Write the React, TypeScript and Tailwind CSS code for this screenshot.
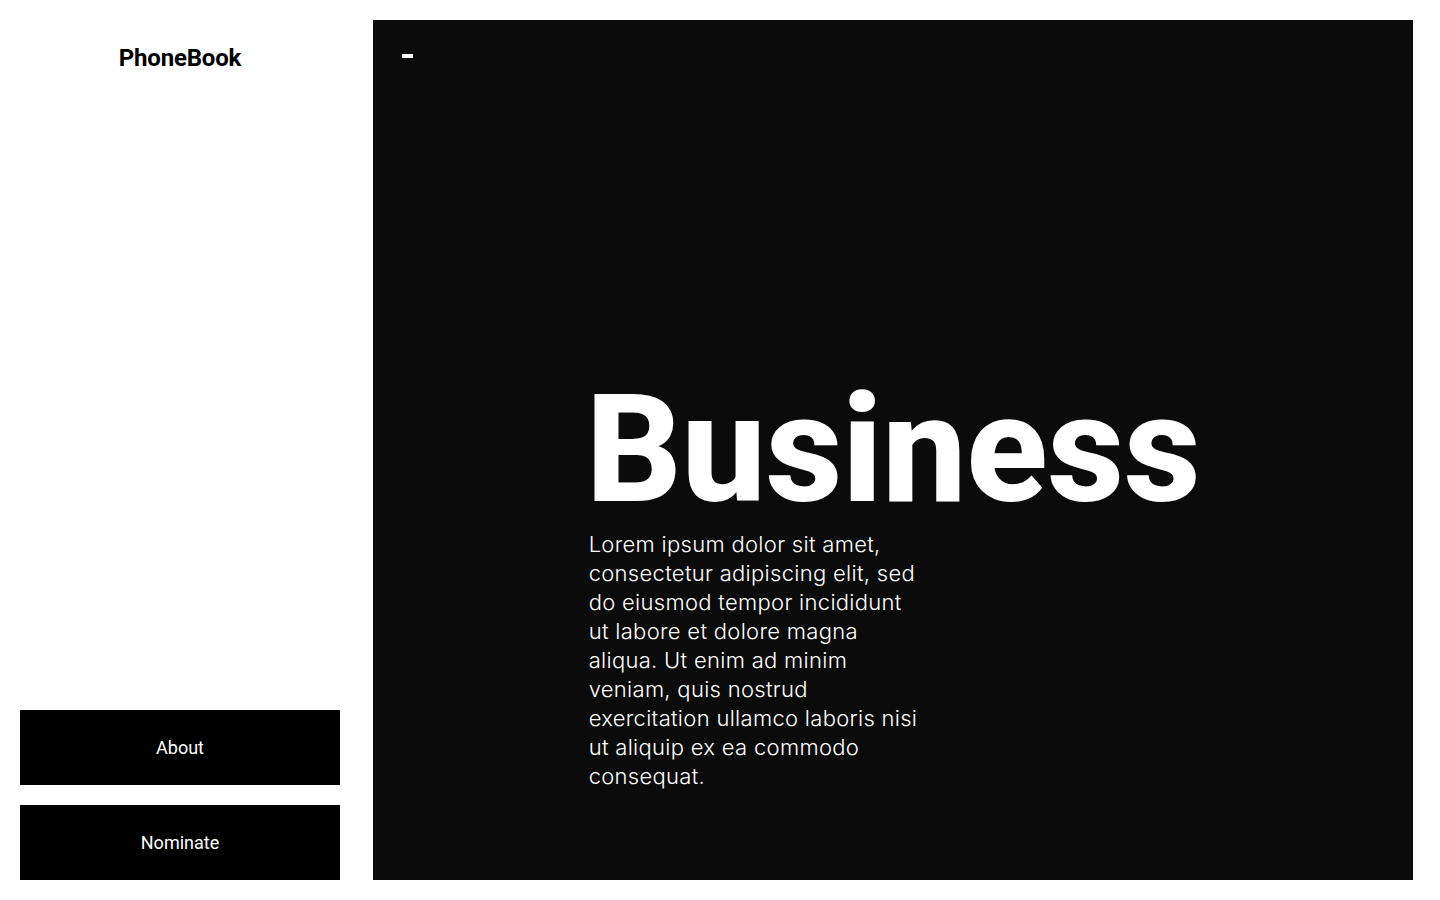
import React from 'react';

const navButtons = ['About', 'Nominate'];

const paragraphLines = [
  'Lorem ipsum dolor sit amet,',
  'consectetur adipiscing elit, sed',
  'do eiusmod tempor incididunt',
  'ut labore et dolore magna',
  'aliqua. Ut enim ad minim',
  'veniam, quis nostrud',
  'exercitation ullamco laboris nisi',
  'ut aliquip ex ea commodo',
  'consequat.',
];

const App: React.FC = () => {
  return (
    <div className="flex h-[900px] w-[1440px] bg-white pl-5 py-5 gap-[33px] font-['Roboto',sans-serif]">
      <aside className="flex w-[320px] flex-col">
        <h1 className="pt-[22px] text-center text-[24px] leading-8 font-bold tracking-[-0.2px] text-black">
          PhoneBook
        </h1>
        <div className="mt-auto flex flex-col gap-5">
          {navButtons.map((label) => (
            <button
              key={label}
              type="button"
              className="h-[75px] w-full bg-black text-[18px] text-white"
            >
              {label}
            </button>
          ))}
        </div>
      </aside>

      <main className="flex w-[1040px] flex-col bg-[#0b0b0b]">
        <div className="pl-[29px] pt-[34px]">
          <span className="block h-1 w-[11px] bg-white" />
        </div>
        <div className="flex flex-1 items-end justify-center pb-[89px]">
          <div className="flex flex-col">
            <h2 className="text-[150px] leading-[130px] font-extrabold tracking-[-0.4px] text-white">
              Business
            </h2>
            <p className="mt-[15px] pl-[3px] font-['Inter',sans-serif] text-[22px] leading-[29px] font-light tracking-[0.3px] whitespace-nowrap text-white">
              {paragraphLines.map((line) => (
                <span key={line} className="block">
                  {line}
                </span>
              ))}
            </p>
          </div>
        </div>
      </main>
    </div>
  );
};

export default App;
